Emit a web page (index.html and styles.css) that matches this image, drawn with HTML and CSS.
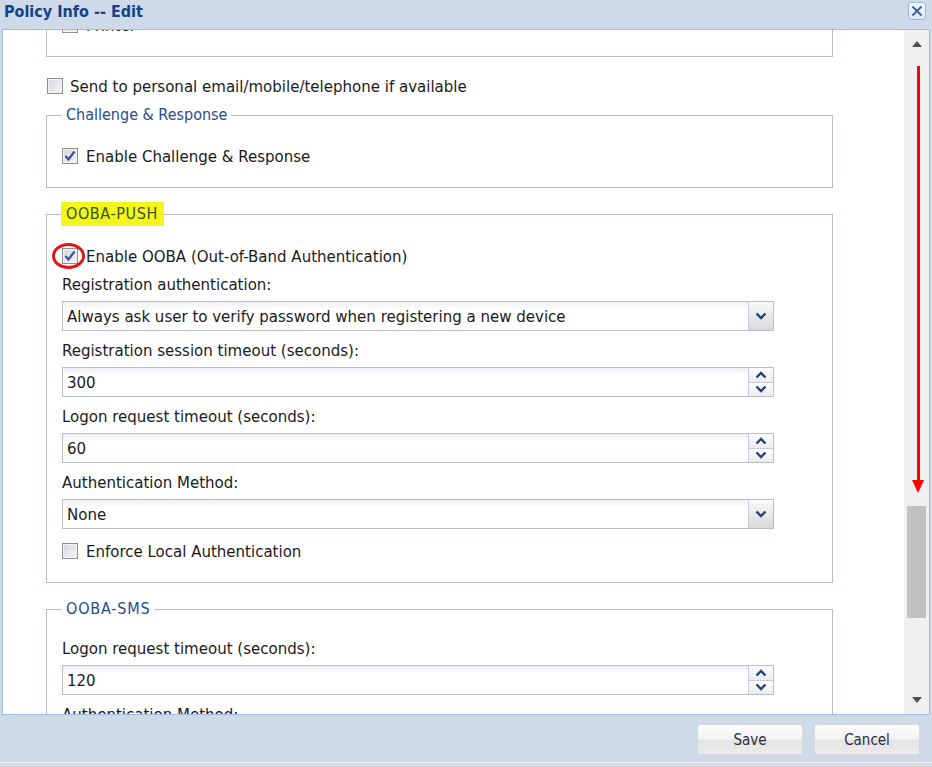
FILE: index.html
```html
<!DOCTYPE html>
<html>
<head>
<meta charset="utf-8">
<title>Policy Info -- Edit</title>
<link rel="stylesheet" href="styles.css">
</head>
<body>
<div class="dialog">
  <div class="titlebar">
    <span class="title">Policy Info -- Edit</span>
    <span class="close"><svg width="12" height="12" viewBox="0 0 12 12"><path d="M1.5 1.5 L10.5 10.5 M10.5 1.5 L1.5 10.5" stroke="#3a5a9c" stroke-width="1.8" fill="none"/></svg></span>
  </div>
  <div class="panel">
    <div class="viewport">
      <div class="fs-cut">
        <div class="row cut-row"><span class="cb"></span><span>Printer</span></div>
      </div>
      <div class="row standalone"><span class="cb"></span><span>Send to personal email/mobile/telephone if available</span></div>

      <fieldset class="fs fs-cr">
        <legend><span class="lg">Challenge &amp; Response</span></legend>
        <div class="row"><span class="cb"><svg width="14" height="14" viewBox="0 0 14 14"><path d="M2.5 7 L5.5 10.5 L11.5 2.5" stroke="#3a4fa3" stroke-width="2.2" fill="none"/></svg></span><span>Enable Challenge &amp; Response</span></div>
      </fieldset>

      <fieldset class="fs fs-push">
        <legend><span class="lg hl">OOBA-PUSH</span></legend>
        <div class="row"><span class="cb"><svg width="14" height="14" viewBox="0 0 14 14"><path d="M2.5 7 L5.5 10.5 L11.5 2.5" stroke="#3a4fa3" stroke-width="2.2" fill="none"/></svg><span class="ring"></span></span><span>Enable OOBA (Out-of-Band Authentication)</span></div>
        <div class="lbl">Registration authentication:</div>
        <div class="field"><span class="val">Always ask user to verify password when registering a new device</span><span class="trigger"><svg width="12" height="8" viewBox="0 0 12 8"><path d="M1.5 1.5 L6 6 L10.5 1.5" stroke="#22427f" stroke-width="2.4" fill="none"/></svg></span></div>
        <div class="lbl">Registration session timeout (seconds):</div>
        <div class="field"><span class="val">300</span><span class="spin"><span><svg width="12" height="8" viewBox="0 0 12 8"><path d="M1.5 6.5 L6 2 L10.5 6.5" stroke="#22427f" stroke-width="2.4" fill="none"/></svg></span><span><svg width="12" height="8" viewBox="0 0 12 8"><path d="M1.5 1.5 L6 6 L10.5 1.5" stroke="#22427f" stroke-width="2.4" fill="none"/></svg></span></span></div>
        <div class="lbl">Logon request timeout (seconds):</div>
        <div class="field"><span class="val">60</span><span class="spin"><span><svg width="12" height="8" viewBox="0 0 12 8"><path d="M1.5 6.5 L6 2 L10.5 6.5" stroke="#22427f" stroke-width="2.4" fill="none"/></svg></span><span><svg width="12" height="8" viewBox="0 0 12 8"><path d="M1.5 1.5 L6 6 L10.5 1.5" stroke="#22427f" stroke-width="2.4" fill="none"/></svg></span></span></div>
        <div class="lbl">Authentication Method:</div>
        <div class="field"><span class="val">None</span><span class="trigger"><svg width="12" height="8" viewBox="0 0 12 8"><path d="M1.5 1.5 L6 6 L10.5 1.5" stroke="#22427f" stroke-width="2.4" fill="none"/></svg></span></div>
        <div class="row row-enforce"><span class="cb"></span><span>Enforce Local Authentication</span></div>
      </fieldset>

      <fieldset class="fs fs-sms">
        <legend><span class="lg">OOBA-SMS</span></legend>
        <div class="lbl first">Logon request timeout (seconds):</div>
        <div class="field"><span class="val">120</span><span class="spin"><span><svg width="12" height="8" viewBox="0 0 12 8"><path d="M1.5 6.5 L6 2 L10.5 6.5" stroke="#22427f" stroke-width="2.4" fill="none"/></svg></span><span><svg width="12" height="8" viewBox="0 0 12 8"><path d="M1.5 1.5 L6 6 L10.5 1.5" stroke="#22427f" stroke-width="2.4" fill="none"/></svg></span></span></div>
        <div class="lbl">Authentication Method:</div>
      </fieldset>
    </div>
    <div class="scrollbar">
      <div class="sb-btn"><span class="tri-up"></span></div>
      <div class="sb-track"><div class="sb-thumb"></div></div>
      <div class="sb-btn"><span class="tri-down"></span></div>
    </div>
  </div>
  <div class="footer">
    <button class="btn">Save</button>
    <button class="btn">Cancel</button>
  </div>
</div>
<div class="annot-arrow"></div>
</body>
</html>
```

FILE: styles.css
```css
html, body {
  margin: 0;
  padding: 0;
}
body {
  width: 932px;
  height: 767px;
  overflow: hidden;
  position: relative;
  background: #cfdae8;
  font-family: "DejaVu Sans Condensed", "DejaVu Sans", sans-serif;
  color: #1a1a1a;
}
.dialog {
  display: flex;
  flex-direction: column;
  height: 767px;
}
.titlebar {
  height: 29px;
  flex: none;
  display: flex;
  align-items: flex-start;
  justify-content: space-between;
  padding: 0 6px 0 4px;
  box-sizing: border-box;
}
.title {
  font-weight: bold;
  font-size: 16px;
  line-height: 24px;
  color: #15428b;
}
.close {
  margin-top: 2px;
  width: 18px;
  height: 18px;
  box-sizing: border-box;
  border: 1px solid #93b4e0;
  border-radius: 3px;
  background: linear-gradient(#f6f9fd, #dce7f5);
  display: flex;
  align-items: center;
  justify-content: center;
}
.panel {
  flex: none;
  width: 928px;
  height: 686px;
  margin-left: 2px;
  box-sizing: border-box;
  border: 1px solid #9dbde6;
  background: #fff;
  display: flex;
}
.viewport {
  flex: 1;
  overflow: hidden;
  padding-left: 43px;
}
.row {
  display: flex;
  align-items: center;
  gap: 8px;
  height: 18px;
  font-size: 16.7px;
  line-height: 18px;
  white-space: nowrap;
}
.cb {
  position: relative;
  flex: none;
  width: 16px;
  height: 16px;
  box-sizing: border-box;
  border: 1px solid #8f8f8f;
  background: linear-gradient(135deg, #d4d6dc, #f6f6f6);
  box-shadow: inset 0 0 0 1px #f2f2f2;
  display: flex;
  align-items: center;
  justify-content: center;
}
.ring {
  position: absolute;
  left: -11px;
  top: -6px;
  width: 33px;
  height: 26px;
  box-sizing: border-box;
  border: 3px solid #e2141c;
  border-radius: 50%;
}
.fs-cut {
  display: flow-root;
  width: 787px;
  height: 27px;
  box-sizing: border-box;
  border: 1px solid #b8bccb;
  border-top: none;
  padding-left: 15px;
}
.cut-row {
  margin-top: -14px;
}
.standalone {
  margin-top: 20px;
  margin-left: 1px;
  gap: 7px;
}
.fs {
  width: 787px;
  min-width: 0;
  box-sizing: border-box;
  margin: 0;
  border: 1px solid #b8bccb;
  padding: 0 15px 22px;
}
.fs legend {
  padding: 0;
  font-size: 16px;
  line-height: 24px;
}
.lg {
  display: inline-block;
  padding: 0 4px;
  color: #2a4a92;
}
.hl {
  background: #f5f51c;
  color: #3a5722;
  margin-left: -1px;
  padding: 0 6px 0 5px;
  letter-spacing: 0.6px;
}
.fs-sms .lg {
  letter-spacing: 0.8px;
}
.fs-cr {
  margin-top: 8px;
  padding-top: 20px;
}
.fs-push {
  margin-top: 14px;
  padding-top: 21px;
}
.fs-sms {
  margin-top: 14px;
  padding-top: 18px;
}
.lbl {
  font-size: 16.7px;
  line-height: 18px;
  margin-top: 10px;
  white-space: nowrap;
}
.lbl.first {
  margin-top: 0;
}
.field {
  display: flex;
  width: 712px;
  height: 30px;
  box-sizing: border-box;
  margin-top: 8px;
  border: 1px solid #b9bdcc;
  background: linear-gradient(#eceef1 0, #fff 7px);
}
.val {
  flex: 1;
  padding-left: 4px;
  font-size: 16.7px;
  line-height: 28px;
  white-space: nowrap;
  overflow: hidden;
}
.trigger {
  flex: none;
  width: 24px;
  border-left: 1px solid #c7cad6;
  background: linear-gradient(#fafafa, #d9d9d9);
  display: flex;
  align-items: center;
  justify-content: center;
}
.spin {
  flex: none;
  width: 24px;
  border-left: 1px solid #c7cad6;
  display: flex;
  flex-direction: column;
}
.spin > span {
  flex: 1;
  display: flex;
  align-items: center;
  justify-content: center;
  background: linear-gradient(#fdfdfd, #ececec);
}
.spin > span + span {
  border-top: 1px solid #c7cad6;
}
.row-enforce {
  margin-top: 13px;
}
.scrollbar {
  flex: none;
  width: 25px;
  background: #f0f0f0;
  display: flex;
  flex-direction: column;
}
.sb-btn {
  height: 28px;
  flex: none;
  display: flex;
  align-items: center;
  justify-content: center;
}
.tri-up {
  width: 0;
  height: 0;
  border-left: 5px solid transparent;
  border-right: 5px solid transparent;
  border-bottom: 6px solid #4d4d4d;
}
.tri-down {
  width: 0;
  height: 0;
  border-left: 5px solid transparent;
  border-right: 5px solid transparent;
  border-top: 6px solid #4d4d4d;
}
.sb-track {
  flex: 1;
  padding: 0 3px;
}
.sb-thumb {
  margin-top: 448px;
  height: 112px;
  background: #c1c1c1;
}
.footer {
  flex: 1;
  display: flex;
  justify-content: flex-end;
  align-items: flex-start;
  gap: 11px;
  padding: 9px 12px 0 0;
  border-bottom: 4px solid #d7d9dc;
  box-shadow: inset 0 -1px 0 #eef2f7;
}
.btn {
  width: 106px;
  height: 31px;
  border: 1px solid #d6dade;
  border-radius: 3px;
  background: linear-gradient(#fdfdfd 0%, #f3f3f3 48%, #e4e4e4 52%, #ebebeb 100%);
  font-family: "DejaVu Sans Condensed", "DejaVu Sans", sans-serif;
  font-size: 15px;
  color: #2c2c3c;
  padding: 0;
}
.annot-arrow {
  position: absolute;
  left: 917px;
  top: 66px;
  width: 3px;
  height: 416px;
  background: #f00;
}
.annot-arrow::after {
  content: "";
  position: absolute;
  left: -5px;
  top: 414px;
  width: 0;
  height: 0;
  border-left: 6.5px solid transparent;
  border-right: 6.5px solid transparent;
  border-top: 13px solid #f00;
}
```
